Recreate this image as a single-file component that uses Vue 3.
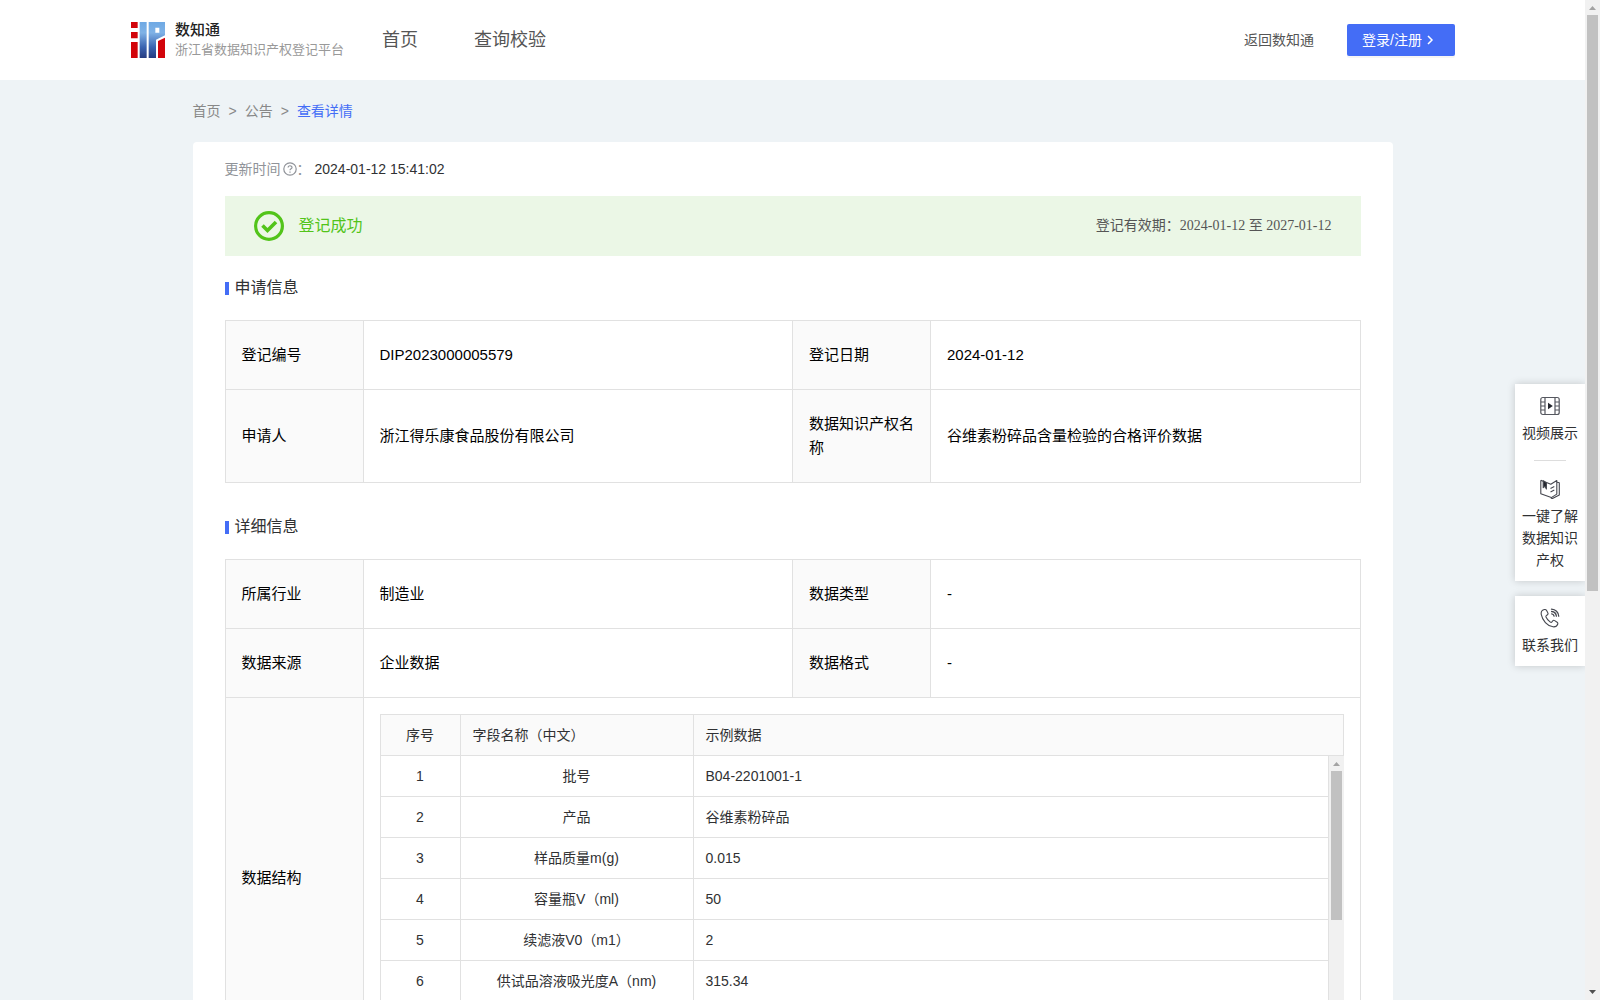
<script setup>
import { ref } from 'vue'

const baseInfo = ref([
  [
    { label: '登记编号', value: 'DIP2023000005579' },
    { label: '登记日期', value: '2024-01-12' },
  ],
  [
    { label: '申请人', value: '浙江得乐康食品股份有限公司' },
    { label: '数据知识产权名称', value: '谷维素粉碎品含量检验的合格评价数据' },
  ],
])

const detailInfo = ref([
  [
    { label: '所属行业', value: '制造业' },
    { label: '数据类型', value: '-' },
  ],
  [
    { label: '数据来源', value: '企业数据' },
    { label: '数据格式', value: '-' },
  ],
])

const fields = ref([
  { name: '批号', sample: 'B04-2201001-1' },
  { name: '产品', sample: '谷维素粉碎品' },
  { name: '样品质量m(g)', sample: '0.015' },
  { name: '容量瓶V（ml)', sample: '50' },
  { name: '续滤液V0（m1）', sample: '2' },
  { name: '供试品溶液吸光度A（nm)', sample: '315.34' },
])
</script>

<template>
  <div class="app">
    <div class="page">
      <header class="header">
        <a class="logo" href="#">
          <svg width="34" height="36" viewBox="0 0 102 108">
            <defs>
              <linearGradient id="logo-blue" gradientUnits="userSpaceOnUse" x1="0" y1="0" x2="0" y2="108">
                <stop offset="0" stop-color="#6fa9e4" />
                <stop offset="0.3" stop-color="#7fb2e6" />
                <stop offset="0.7" stop-color="#3a63b0" />
                <stop offset="1" stop-color="#253b80" />
              </linearGradient>
            </defs>
            <path fill="#d2040b" d="M0 0h20v18H0zM0 30h20v19H0zM0 60h20v48H0zM81 57l21-10v61H81z" />
            <path fill="url(#logo-blue)" d="M26 0h21v108H26z" />
            <path fill="url(#logo-blue)" fill-rule="evenodd" d="M53 0h49v40L75 53v55H53zM73 17v15h12V17z" />
          </svg>
          <span class="logo-text">
            <strong>数知通</strong>
            <span>浙江省数据知识产权登记平台</span>
          </span>
        </a>
        <nav class="nav">
          <a href="#">首页</a>
          <a href="#">查询校验</a>
        </nav>
        <a class="back" href="#">返回数知通</a>
        <button class="login" type="button">
          登录/注册
          <svg width="8" height="10" viewBox="0 0 8 10" fill="none" stroke="currentColor" stroke-width="1.5">
            <path d="M2 1l4 4-4 4" />
          </svg>
        </button>
      </header>

      <main class="main">
        <nav class="breadcrumb">
          <a href="#">首页</a>
          <span>&gt;</span>
          <a href="#">公告</a>
          <span>&gt;</span>
          <a class="current" href="#">查看详情</a>
        </nav>

        <div class="card">
          <div class="update">
            <span>更新时间</span>
            <svg width="14" height="14" viewBox="0 0 14 14" fill="none" stroke="currentColor" stroke-width="1.2">
              <circle cx="7" cy="7" r="6.2" />
              <path d="M5.1 5.6c0-2.5 3.9-2.4 3.9-.2C9 6.8 7 6.7 7 8.3M7 9.5v1.3" />
            </svg>
            <span>：</span>
            <time>2024-01-12 15:41:02</time>
          </div>

          <div class="status">
            <svg width="30" height="30" viewBox="0 0 30 30" fill="none" stroke="#52c41a">
              <circle cx="15" cy="15" r="13.4" stroke-width="3.2" />
              <path d="M8.5 14.5l5 5 8.5-8.5" stroke-width="3.6" />
            </svg>
            <span class="status-text">登记成功</span>
            <span class="period">登记有效期：2024-01-12 至 2027-01-12</span>
          </div>

          <h2 class="title">申请信息</h2>
          <table class="info">
            <colgroup>
              <col class="col-label" /><col /><col class="col-label" /><col />
            </colgroup>
            <tbody>
              <tr v-for="(row, index) in baseInfo" :key="index">
                <template v-for="item in row" :key="item.label">
                  <th scope="row">{{ item.label }}</th>
                  <td>{{ item.value }}</td>
                </template>
              </tr>
            </tbody>
          </table>

          <h2 class="title title-next">详细信息</h2>
          <table class="info">
            <colgroup>
              <col class="col-label" /><col /><col class="col-label" /><col />
            </colgroup>
            <tbody>
              <tr v-for="(row, index) in detailInfo" :key="index">
                <template v-for="item in row" :key="item.label">
                  <th scope="row">{{ item.label }}</th>
                  <td>{{ item.value }}</td>
                </template>
              </tr>
              <tr>
                <th scope="row">数据结构</th>
                <td class="struct" colspan="3">
                  <table class="fields fields-head">
                    <colgroup>
                      <col class="col-no" /><col class="col-name" /><col />
                    </colgroup>
                    <thead>
                      <tr>
                        <th class="center">序号</th>
                        <th>字段名称（中文）</th>
                        <th>示例数据</th>
                      </tr>
                    </thead>
                  </table>
                  <div class="fields-body">
                    <div class="fields-scroll">
                      <table class="fields">
                        <colgroup>
                          <col class="col-no" /><col class="col-name" /><col />
                        </colgroup>
                        <tbody>
                          <tr v-for="(field, index) in fields" :key="index">
                            <td class="center">{{ index + 1 }}</td>
                            <td class="center">{{ field.name }}</td>
                            <td>{{ field.sample }}</td>
                          </tr>
                        </tbody>
                      </table>
                    </div>
                    <div class="scrollbar">
                      <svg class="arrow" width="15" height="15" viewBox="0 0 15 15"><path fill="#a3a3a3" d="M4 10l3.5-4L11 10z" /></svg>
                      <div class="track"><div class="thumb thumb-fields"></div></div>
                      <svg class="arrow" width="15" height="15" viewBox="0 0 15 15"><path fill="#505050" d="M4 5l3.5 4L11 5z" /></svg>
                    </div>
                  </div>
                </td>
              </tr>
            </tbody>
          </table>
        </div>
      </main>
    </div>

    <div class="scrollbar">
      <svg class="arrow" width="15" height="15" viewBox="0 0 15 15"><path fill="#a3a3a3" d="M4 10l3.5-4L11 10z" /></svg>
      <div class="track"><div class="thumb thumb-page"></div></div>
      <svg class="arrow" width="15" height="15" viewBox="0 0 15 15"><path fill="#505050" d="M4 5l3.5 4L11 5z" /></svg>
    </div>

    <aside class="side">
      <div class="side-box">
        <a href="#">
          <svg width="20" height="20" viewBox="0 0 20 20" fill="none" stroke="#55575f" stroke-width="1.2">
            <rect x="0.8" y="1.5" width="18.4" height="17" rx="2" />
            <path d="M5 1.5v17M15 1.5v17M1 6h4M1 10h4M1 14h4M15 6h4M15 10h4M15 14h4" />
            <path d="M8 6.8v6.400l4.800-3.200z" fill="#24262e" stroke="none" />
          </svg>
          <span>视频展示</span>
        </a>
        <hr />
        <a href="#">
          <svg width="20" height="20" viewBox="0 0 20 20" fill="none" stroke="#45474f" stroke-width="1.1" stroke-linejoin="round">
            <path d="M.8 1.2l3 1.300M6.500 3.500l4.300 1.800 6-3.800v13.600l-5.500 3.500L.8 14.700V1.200" />
            <path d="M17 3.200l2.300.6v12.200l-7 3.600-1.500-.6" />
            <path d="M3.200 1.800v6.900l1.600-1.400 1.600 2.700V3.400z" fill="#24262e" />
            <path d="M10.500 9.500l3.800-2M10.500 13l3.800-2" />
          </svg>
          <span>一键了解数据知识产权</span>
        </a>
      </div>
      <div class="side-box">
        <a href="#">
          <svg width="20" height="20" viewBox="0 0 20 20" fill="none" stroke="#45474f" stroke-width="1.1" stroke-linejoin="round" stroke-linecap="round">
            <path d="M4.5 1.5C2 2 .8 4 1.3 6.7c1 5.5 6 11.3 11.7 12.1 2.3.3 4-.8 4.7-2.6.3-.8 0-1.5-.6-2l-2.4-1.6c-.8-.5-1.6-.3-2.1.4l-.7 1c-.4.5-1 .5-1.6.1-1.9-1.3-3.4-3.1-4.3-5.1-.2-.5-.1-1 .4-1.4l1-.8c.7-.6.8-1.3.4-2L6.6 2.400c-.4-.7-1.2-1.1-2.1-.9z" />
            <path d="M11.5 1.2c4 .2 7 3.1 7.2 7M11.6 3.5c2.6.2 4.5 2.1 4.8 4.7M11.7 5.8c1.3.2 2.2 1.1 2.4 2.3" stroke-width="1.3" />
          </svg>
          <span>联系我们</span>
        </a>
      </div>
    </aside>
  </div>
</template>

<style>
body {
  margin: 0;
}
</style>

<style scoped>
.app {
  position: relative;
  display: flex;
  height: 100vh;
  overflow: hidden;
  background: #eef3f6;
  color: #303133;
  font-family: 'Liberation Sans', 'Noto Sans CJK SC', sans-serif;
  font-size: 14px;
  line-height: 22px;
}

.page {
  flex: 1;
  min-width: 0;
  overflow-y: auto;
  scrollbar-width: none;
}

a {
  color: inherit;
  text-decoration: none;
}

/* Header */
.header {
  display: flex;
  align-items: center;
  height: 80px;
  padding: 0 130px 0 131px;
  background: #fff;
}

.logo {
  display: flex;
  align-items: center;
  gap: 10px;
}

.logo-text {
  display: flex;
  flex-direction: column;
  color: #999;
  font-size: 13px;
  line-height: 20px;
}

.logo-text strong {
  color: #222;
  font-size: 15px;
  font-weight: 500;
}

.nav {
  display: flex;
  flex: 1;
  gap: 56px;
  margin-left: 38px;
  color: #555;
  font-size: 18px;
}

.back {
  margin-right: 33px;
  color: #555;
}

.login {
  display: flex;
  align-items: center;
  gap: 4px;
  width: 108px;
  height: 32px;
  padding: 0 15px;
  border: none;
  border-radius: 2px;
  background: #446df6;
  box-shadow: 0 2px 0 rgba(0, 0, 0, 0.04);
  color: #fff;
  font-family: inherit;
  font-size: 14px;
  line-height: 22px;
  cursor: pointer;
}

/* Content */
.main {
  max-width: 1200px;
  margin: 0 auto;
}

.breadcrumb {
  display: flex;
  align-items: center;
  gap: 8px;
  height: 62px;
  color: #888;
}

.breadcrumb .current {
  color: #446df6;
}

.card {
  padding: 0 32px 32px;
  border-radius: 4px;
  background: #fff;
}

.update {
  display: flex;
  align-items: center;
  height: 54px;
  color: #909399;
}

.update svg {
  margin-left: 2px;
}

.update time {
  margin-left: 4px;
  color: #303133;
}

.status {
  display: flex;
  align-items: center;
  height: 60px;
  padding: 0 29px;
  background: #ebf7e6;
}

.status-text {
  flex: 1;
  margin-left: 15px;
  color: #52c41a;
  font-size: 16px;
}

.period {
  color: #555;
  font-family: 'Liberation Serif', 'Noto Sans CJK SC', serif;
}

.title {
  display: flex;
  align-items: center;
  gap: 6px;
  height: 64px;
  margin: 0;
  color: #303133;
  font-size: 16px;
  font-weight: 400;
}

.title::before {
  content: '';
  width: 4px;
  height: 13px;
  background: #446df6;
}

.title-next {
  margin-top: 12px;
}

.info {
  width: 100%;
  border-collapse: collapse;
  table-layout: fixed;
  color: #000;
  font-size: 15px;
  line-height: 24px;
}

.info th,
.info td {
  padding: 22px 12px 22px 16px;
  border: 1px solid #e1e1e1;
  font-weight: 400;
  text-align: left;
}

.info th {
  background: #fafafa;
}

.col-label {
  width: 138px;
}

.info .struct {
  padding: 16px;
}

/* Field list */
.fields {
  width: 100%;
  border-collapse: separate;
  border-spacing: 0;
  border-left: 1px solid #e1e1e1;
  table-layout: fixed;
  color: #303133;
  font-size: 14px;
  line-height: 24px;
}

.fields th,
.fields td {
  padding: 8px 12px;
  border-width: 0 1px 1px 0;
}

.fields-head {
  border-top: 1px solid #e1e1e1;
}

.fields .center {
  text-align: center;
}

.col-no {
  width: 80px;
}

.col-name {
  width: 233px;
}

.fields-body {
  display: flex;
  height: 286px;
}

.fields-scroll {
  flex: 1;
  overflow: hidden;
}

/* Scrollbars */
.scrollbar {
  display: flex;
  flex-direction: column;
  flex: none;
  width: 15px;
  background: #f1f1f1;
}

.arrow {
  display: block;
}

.track {
  flex: 1;
  padding: 0 2px;
}

.thumb {
  background: #c1c1c1;
}

.thumb-page {
  height: 59.4%;
}

.thumb-fields {
  height: 149px;
}

/* Floating shortcuts */
.side {
  position: absolute;
  top: 384px;
  right: 15px;
  display: flex;
  flex-direction: column;
  gap: 15px;
  width: 70px;
  clip-path: inset(-16px 0 -16px -16px);
}

.side-box {
  padding: 12px 7px 10px;
  background: #fff;
  box-shadow: 0 0 8px rgba(0, 0, 0, 0.18);
}

.side-box a {
  display: flex;
  flex-direction: column;
  align-items: center;
  gap: 6px;
  text-align: center;
}

.side-box hr {
  width: 32px;
  margin: 16px auto 18px;
  border: none;
  border-top: 1px solid #ddd;
}
</style>
